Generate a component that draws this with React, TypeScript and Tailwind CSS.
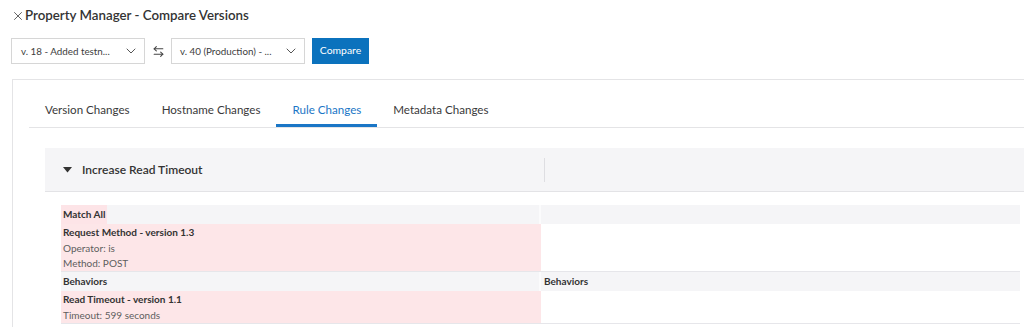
import React from "react";
import { ChevronDown, ArrowLeftRight, X } from "lucide-react";

export default function App() {
  const tabs = ["Version Changes", "Hostname Changes", "Rule Changes", "Metadata Changes"];
  return (
    <div
      className="w-[1024px] h-[327px] overflow-hidden bg-white text-[#333]"
      style={{ fontFamily: "Lato, 'Open Sans', sans-serif" }}
    >
      {/* Title */}
      <div className="flex items-center h-[31px] pl-[11px]">
        <X size={14} strokeWidth={1.3} className="text-[#333] mr-[0px]" />
        <span className="text-[13.3px] font-semibold">Property Manager - Compare Versions</span>
      </div>
      {/* Controls */}
      <div className="flex items-center h-[26px] mt-[7px] pl-[11px]">
        <div className="w-[134px] h-[26px] border border-[#d6d6d6] flex items-center justify-between pl-[9px] pr-[5px] text-[9.8px] text-[#3d3d3d]">
          <span>v. 18 - Added testn...</span>
          <ChevronDown size={16} strokeWidth={1.5} className="text-[#555]" />
        </div>
        <div className="w-[26px] flex justify-center">
          <ArrowLeftRight size={13} strokeWidth={2} className="text-[#444]" />
        </div>
        <div className="w-[134px] h-[26px] border border-[#d6d6d6] flex items-center justify-between pl-[8px] pr-[5px] text-[9.8px] text-[#3d3d3d]">
          <span>v. 40 (Production) - ...</span>
          <ChevronDown size={16} strokeWidth={1.5} className="text-[#555]" />
        </div>
        <button className="ml-[7px] w-[57px] h-[26px] bg-[#0b72bd] text-white text-[10.4px] flex items-center justify-center">
          Compare
        </button>
      </div>
      {/* Panel */}
      <div className="mt-[15px] ml-[12px] border-t border-l border-[#e4e4e6] h-[300px]">
        <div className="ml-[16px] flex h-[48px] border-b border-[#e4e4e6]">
          {tabs.map((t) => (
            <div
              key={t}
              className={
                "px-[16px] flex items-center pt-[20px] text-[11.6px] " +
                (t === "Rule Changes"
                  ? "text-[#1a76c6] border-b-[3px] border-[#1a76c6] pb-[5px]"
                  : "text-[#3a3a3a] pb-[8px]")
              }
            >
              {t}
            </div>
          ))}
        </div>
        <div className="ml-[32px] mt-[20px] h-[44px] bg-[#f5f5f7] border-b border-[#e3e3e6] flex items-center">
          <div className="w-[499px] flex items-center pl-[18px]">
            <svg width="9" height="6" viewBox="0 0 9 6" className="mr-[10px]">
              <polygon points="0,0 9,0 4.5,5.5" fill="#333" />
            </svg>
            <span className="text-[12px] font-semibold text-[#333]">Increase Read Timeout</span>
          </div>
          <div className="w-px h-[24px] bg-[#dedee2]" />
        </div>
        {/* Table */}
        <div className="ml-[48px] mt-[13px] w-[959px] text-[10px] border-b border-[#e6e6ea]">
          <div className="flex h-[19px] bg-[#f5f5f7]">
            <div className="w-[478px] flex items-center">
              <span className="bg-[#fde4e7] h-full flex items-center pl-[2px] pr-[2px] font-bold text-[#333]">Match All</span>
            </div>
            <div className="w-[2px] bg-[#fbfbfc]" />
            <div className="flex-1" />
          </div>
          <div className="flex h-[48px] border-b border-[#e6e6ea]">
            <div className="w-[480px] bg-[#fde6e8] pl-[2px] pt-[1px] leading-[15.5px]">
              <div className="font-bold text-[#333]">Request Method - version 1.3</div>
              <div className="text-[#5e5e5e]">Operator: is</div>
              <div className="text-[#5e5e5e]">Method: POST</div>
            </div>
            <div className="flex-1 bg-white" />
          </div>
          <div className="flex h-[19px] bg-[#f5f5f7]">
            <div className="w-[478px] flex items-center pl-[2px] font-bold text-[#333]">Behaviors</div>
            <div className="w-[2px] bg-[#fbfbfc]" />
            <div className="flex-1 flex items-center pl-[3px] font-bold text-[#333]">Behaviors</div>
          </div>
          <div className="flex h-[32px]">
            <div className="w-[480px] bg-[#fde6e8] pl-[2px] pt-[1px] leading-[15.5px]">
              <div className="font-bold text-[#333]">Read Timeout - version 1.1</div>
              <div className="text-[#5e5e5e]">Timeout: 599 seconds</div>
            </div>
            <div className="flex-1 bg-white" />
          </div>
        </div>
      </div>
    </div>
  );
}
